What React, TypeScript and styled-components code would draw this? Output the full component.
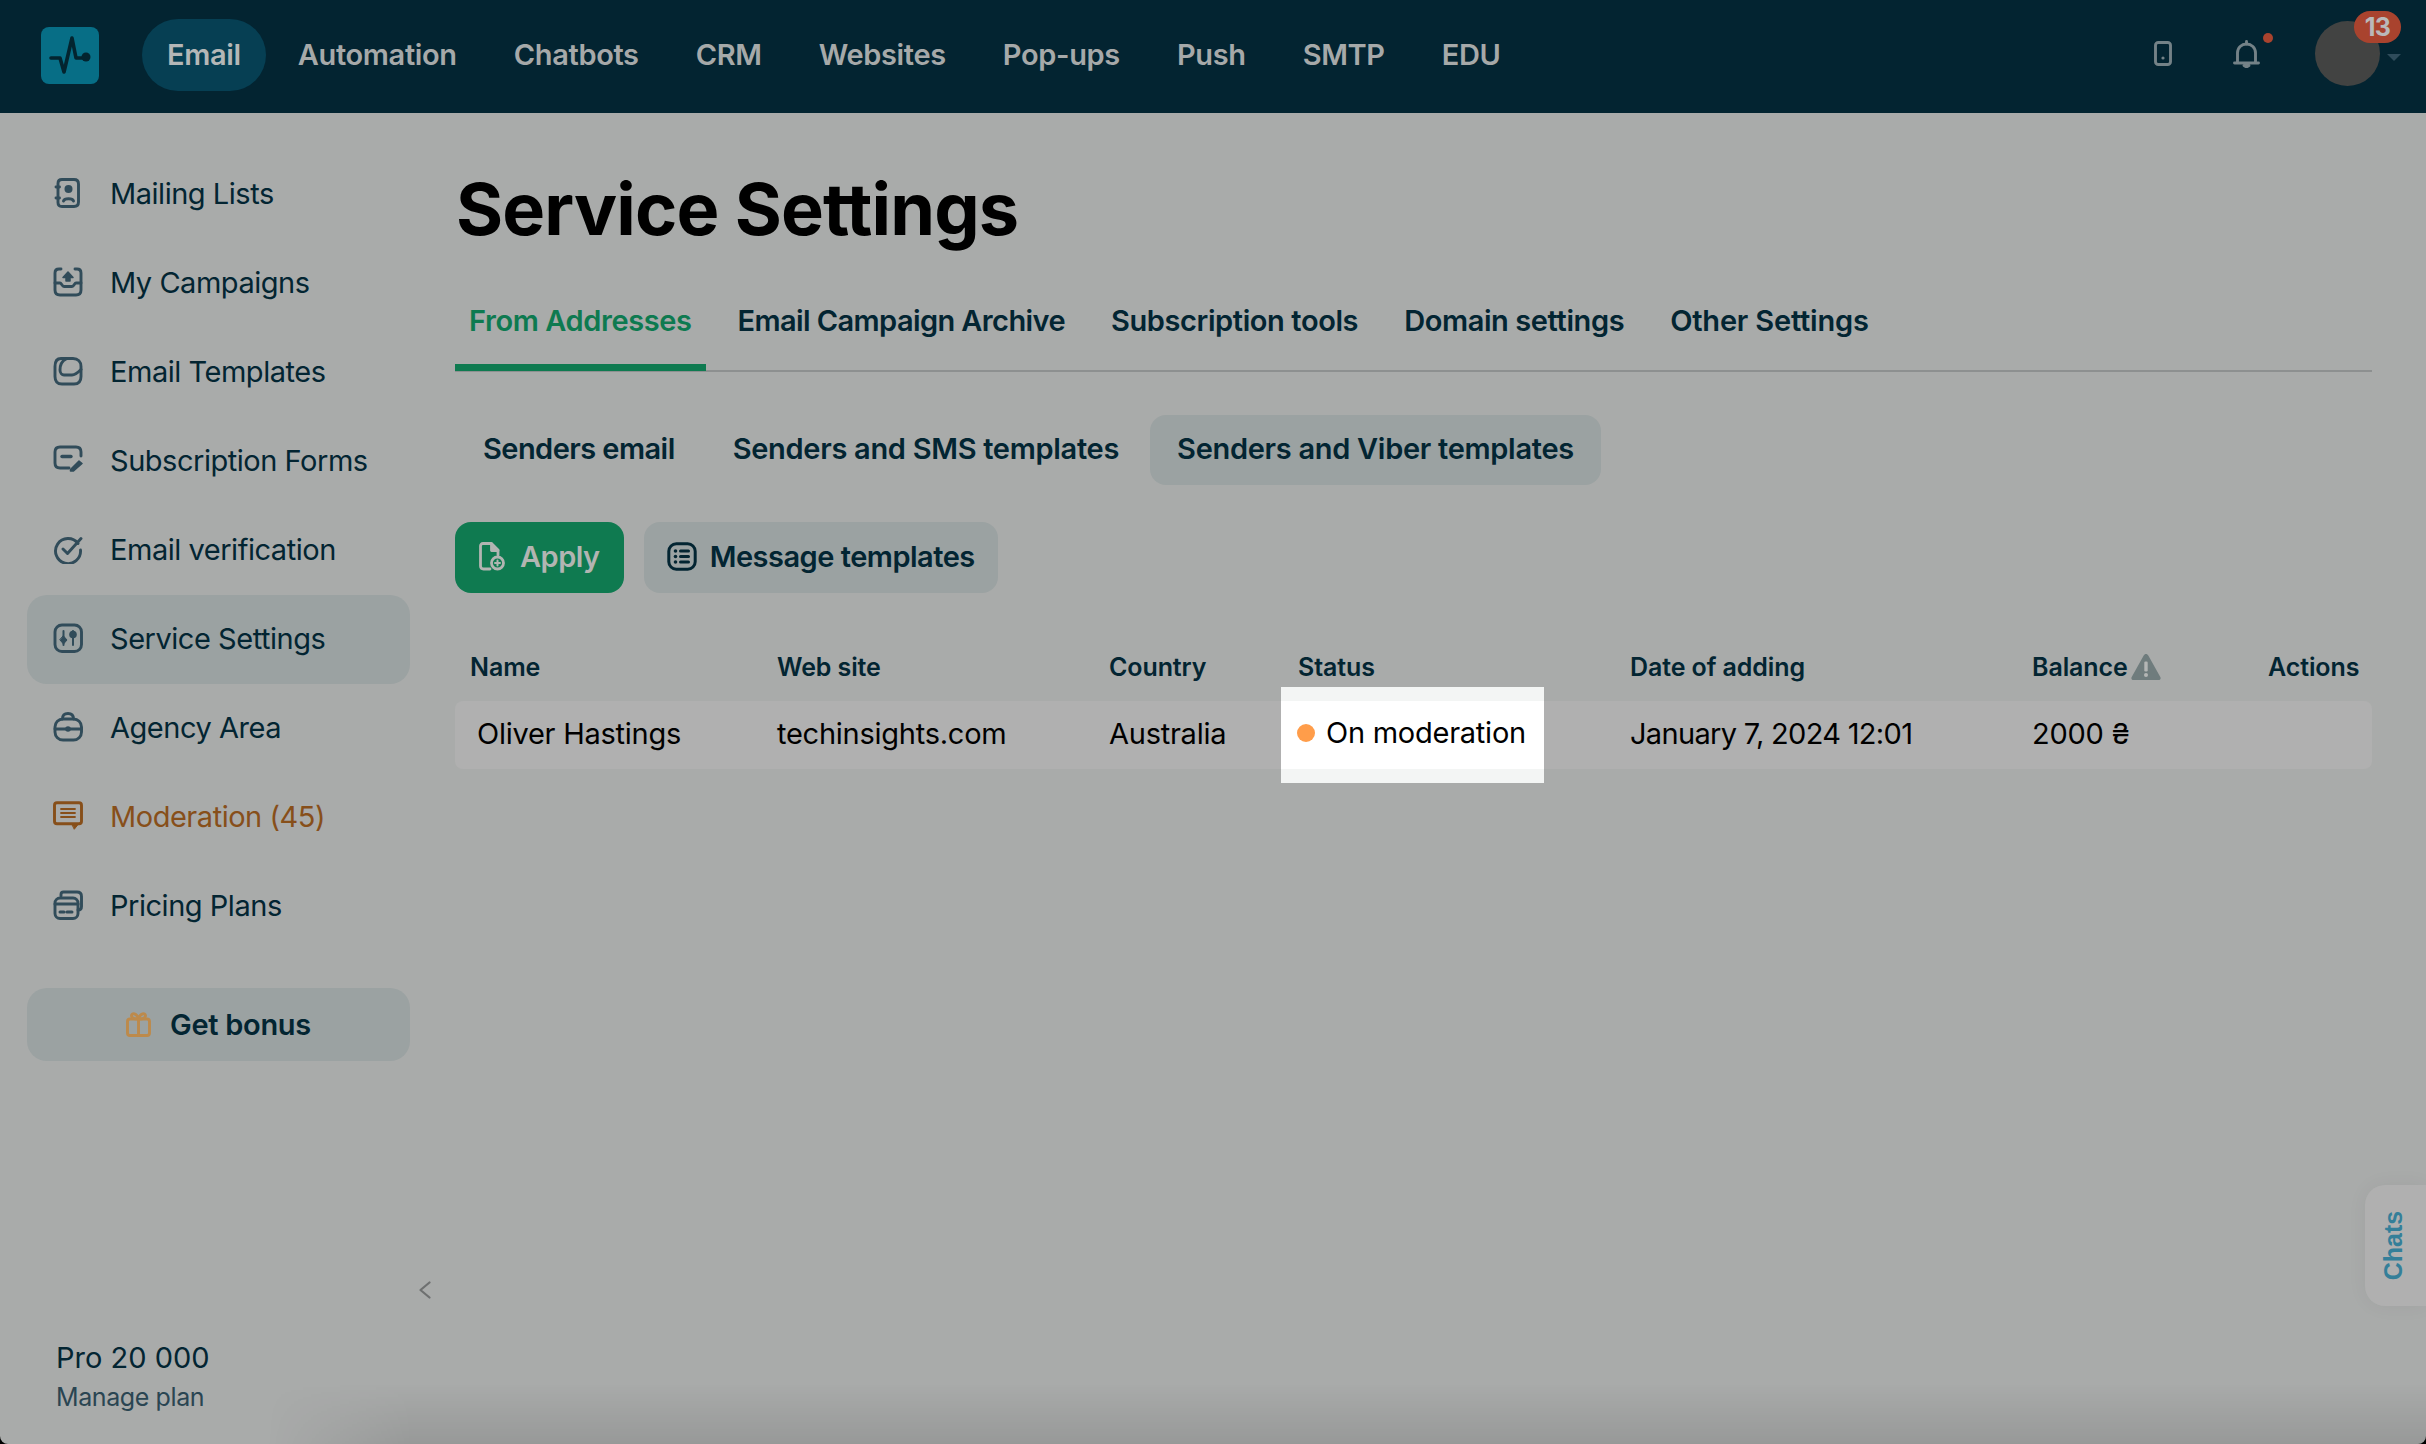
import React from "react";
import styled, { createGlobalStyle } from "styled-components";

const FONT = `Inter, "Noto Sans", "Liberation Sans", sans-serif`;
const INK = "#032532";
const ICON = "#314c5a";

const Global = createGlobalStyle`
  html, body { margin: 0; padding: 0; background: #000; }
  body { font-family: ${FONT}; overflow: hidden; }
  * { box-sizing: border-box; }
`;

const Page = styled.div`
  position: relative;
  width: 2426px;
  height: 1444px;
  display: flex;
  flex-direction: column;
  background: #a9abaa;
  border-radius: 0 0 8px 8px;
  overflow: hidden;
`;

const TopBar = styled.header`
  flex: 0 0 113px;
  display: flex;
  align-items: center;
  padding: 0 0 3px 41px;
  background: #032431;
`;

const Logo = styled.div`
  width: 58px;
  height: 57px;
  margin-right: 43px;
  border-radius: 8px;
  background: #076e86;
  display: flex;
  flex: none;
`;

const Nav = styled.nav`
  display: flex;
  align-items: center;
  gap: 7px;
  flex: 1;
`;

const NavItem = styled.a<{ $active?: boolean }>`
  height: 72px;
  padding: 0 25px 2px;
  display: flex;
  align-items: center;
  border-radius: 36px;
  font-size: 29px;
  font-weight: 600;
  letter-spacing: -0.35px;
  color: ${(p) => (p.$active ? "#b4b7b7" : "#a6a9a9")};
  background: ${(p) => (p.$active ? "#063f53" : "transparent")};
`;

const TopActions = styled.div`
  display: flex;
  align-items: center;
  padding-right: 26px;
  margin-bottom: 3px;
`;

const TopIcon = styled.span<{ $gap?: number }>`
  position: relative;
  display: flex;
  margin-left: ${(p) => p.$gap ?? 0}px;
  color: #748287;
`;

const NotifyDot = styled.i`
  position: absolute;
  top: -7px;
  right: -13px;
  width: 10px;
  height: 10px;
  border-radius: 50%;
  background: #a9432e;
`;

const AvatarWrap = styled.div`
  position: relative;
  width: 85px;
  height: 65px;
  margin-left: 55px;
`;

const Avatar = styled.div`
  width: 65px;
  height: 65px;
  border-radius: 50%;
  background: #424342;
`;

const Badge = styled.span`
  position: absolute;
  top: -10px;
  left: 39px;
  width: 47px;
  height: 32px;
  border-radius: 16px;
  background: #a9432e;
  color: #b9b9b9;
  font-size: 25px;
  font-weight: 700;
  letter-spacing: -0.8px;
  display: flex;
  align-items: center;
  justify-content: center;
`;

const Caret = styled.i`
  position: absolute;
  left: 72px;
  top: 33px;
  border-left: 7px solid transparent;
  border-right: 7px solid transparent;
  border-top: 7px solid #2f4c5b;
`;

const Body = styled.div`
  flex: 1;
  display: flex;
  min-height: 0;
`;

const Sidebar = styled.aside`
  flex: 0 0 455px;
  display: flex;
  flex-direction: column;
  padding: 37px 0 0 27px;
`;

const SideItem = styled.a<{ $active?: boolean; $warn?: boolean }>`
  width: 383px;
  height: 89px;
  flex: none;
  padding: 0 0 3px 26px;
  display: flex;
  align-items: center;
  gap: 27px;
  border-radius: 20px;
  font-size: 29px;
  font-weight: 400;
  letter-spacing: -0.47px;
  color: ${(p) => (p.$warn ? "#874f1a" : INK)};
  background: ${(p) => (p.$active ? "#9ba2a2" : "transparent")};
  svg { color: ${(p) => (p.$warn ? "#874f1a" : ICON)}; }
`;

const BonusButton = styled.a`
  width: 383px;
  height: 73px;
  margin-top: 37px;
  flex: none;
  display: flex;
  align-items: center;
  justify-content: center;
  gap: 19px;
  border-radius: 20px;
  background: #9ba2a2;
  color: ${INK};
  font-size: 29px;
  font-weight: 600;
  letter-spacing: -0.3px;
  svg { color: #bd8a4b; }
`;

const Collapse = styled.span`
  margin-top: auto;
  align-self: flex-end;
  margin-right: 24px;
  display: flex;
  color: #6e7070;
`;

const Plan = styled.div`
  margin: 40px 0 30px 29px;
`;

const PlanName = styled.div`
  font-size: 29px;
  line-height: 38px;
  letter-spacing: 0;
  color: ${INK};
`;

const PlanLink = styled.div`
  margin-top: 3px;
  font-size: 25px;
  line-height: 34px;
  letter-spacing: -0.4px;
  color: #2a4552;
`;

const Main = styled.main`
  flex: 1;
  padding: 56px 54px 0 0;
`;

const Title = styled.h1`
  margin: 0 0 0 1px;
  font-size: 72px;
  line-height: 80px;
  font-weight: 700;
  letter-spacing: -0.85px;
  color: #000;
`;

const Tabs = styled.div`
  margin-top: 21px;
  display: flex;
  gap: 18px;
  height: 102px;
  border-bottom: 2px solid #8d9090;
`;

const Tab = styled.a<{ $active?: boolean; $spacing: number }>`
  height: 101px;
  padding: 7px 14px 0;
  display: flex;
  align-items: center;
  font-size: 29px;
  font-weight: 600;
  letter-spacing: ${(p) => p.$spacing}px;
  color: ${(p) => (p.$active ? "#0e7a50" : INK)};
  border-bottom: 7px solid ${(p) => (p.$active ? "#0e7a50" : "transparent")};
`;

const SubTabs = styled.div`
  margin: 43px 0 0 1px;
  display: flex;
  gap: 4px;
`;

const SubTab = styled.a<{ $active?: boolean; $spacing: number }>`
  height: 70px;
  padding: 0 27px 3px;
  display: flex;
  align-items: center;
  border-radius: 16px;
  font-size: 29px;
  font-weight: 600;
  letter-spacing: ${(p) => p.$spacing}px;
  color: ${INK};
  background: ${(p) => (p.$active ? "#9ba2a2" : "transparent")};
`;

const Actions = styled.div`
  margin-top: 37px;
  display: flex;
  gap: 20px;
`;

const Button = styled.a<{ $primary?: boolean }>`
  height: 71px;
  padding: 0 ${(p) => (p.$primary ? "24px" : "23px")} 2px;
  display: flex;
  align-items: center;
  gap: ${(p) => (p.$primary ? "15px" : "13px")};
  border-radius: 16px;
  font-size: 29px;
  font-weight: 600;
  letter-spacing: -0.5px;
  color: ${(p) => (p.$primary ? "#b2b5b2" : INK)};
  background: ${(p) => (p.$primary ? "#0f7a50" : "#9ba2a2")};
`;

const COLS = "322px 332px 189px 332px 402px 236px 1fr";

const HeadRow = styled.div`
  margin-top: 47px;
  height: 54px;
  display: grid;
  grid-template-columns: ${COLS};
  align-items: center;
`;

const HeadCell = styled.div<{ $inset?: number }>`
  display: flex;
  align-items: center;
  gap: 3px;
  padding-left: ${(p) => p.$inset ?? 0}px;
  font-size: 25px;
  font-weight: 600;
  letter-spacing: -0.1px;
  color: ${INK};
`;

const DataRow = styled.div`
  margin-top: 7px;
  height: 68px;
  display: grid;
  grid-template-columns: ${COLS};
  border-radius: 8px;
  background: #b0b0b0;
`;

const DataCell = styled.div<{ $inset?: number }>`
  position: relative;
  display: flex;
  align-items: center;
  padding: 0 0 4px ${(p) => p.$inset ?? 0}px;
  font-size: 29px;
  letter-spacing: -0.25px;
  color: #000;
`;

const DateCell = styled(DataCell)`
  letter-spacing: -0.68px;
`;

const Spotlight = styled.div`
  position: absolute;
  left: -17px;
  top: -14px;
  width: 263px;
  height: 96px;
  display: flex;
  align-items: center;
  gap: 11px;
  padding: 0 0 5px 16px;
  background: linear-gradient(
    #f3f5f4 14px,
    #fff 14px,
    #fff 82px,
    #f3f5f4 82px
  );
`;

const StatusDot = styled.i`
  width: 18px;
  height: 18px;
  border-radius: 50%;
  background: #ff9d4a;
  flex: none;
`;

const ChatsTab = styled.div`
  position: absolute;
  right: 0;
  top: 1185px;
  width: 61px;
  height: 121px;
  padding-right: 3px;
  border-radius: 20px 0 0 20px;
  background: #b0b0b0;
  box-shadow: 0 0 20px rgba(0, 0, 0, 0.05);
  display: flex;
  align-items: center;
  justify-content: center;
`;

const ChatsLabel = styled.span`
  display: block;
  transform: rotate(-90deg);
  font-family: "Liberation Sans", sans-serif;
  font-weight: 700;
  font-size: 25px;
  color: #347f99;
`;

const BottomShade = styled.div`
  position: absolute;
  left: 0;
  right: 0;
  bottom: 0;
  height: 60px;
  pointer-events: none;
  background: linear-gradient(rgba(0, 0, 0, 0), rgba(0, 0, 0, 0.1));
  -webkit-mask-image: linear-gradient(90deg, transparent 11%, #000 17%);
  mask-image: linear-gradient(90deg, transparent 11%, #000 17%);
`;

const Svg = styled.svg.attrs({
  fill: "none",
  stroke: "currentColor",
  strokeLinecap: "round",
  strokeLinejoin: "round",
})`
  display: block;
  flex: none;
`;

const SideSvg = styled(Svg).attrs({ viewBox: "0 0 30 30", strokeWidth: 2.9 })`
  width: 30px;
  height: 30px;
`;

const IconList = () => (
  <SideSvg>
    <path d="M5 5.500C5 3 6.500 1.500 9 1.500h12c3 0 4.500 1.500 4.500 4.500v18c0 3-1.500 4.500-4.500 4.500H9c-2.500 0-4-1.500-4-4z" />
    <path d="M3 9h3.500M3 20h3.500" />
    <circle cx="15.500" cy="11" r="4" fill="currentColor" stroke="none" />
    <path d="M10.500 23c1-3 9-3 10 0" />
  </SideSvg>
);
const IconCampaign = () => (
  <SideSvg>
    <path d="M8 2H6C3.500 2 2 3.500 2 6v17c0 3 1.500 5 5 5h16c3.500 0 5-2 5-5V6c0-2.500-1.500-4-4-4h-2" />
    <path d="M2 16h5c1.500 0 2 3.500 4 3.500h8c2 0 2.500-3.500 4-3.500h5" />
    <path d="M15 5l5 5.500h-3v3.500h-4v-3.500h-3z" fill="currentColor" strokeWidth="1.500" />
  </SideSvg>
);
const IconTemplate = () => (
  <SideSvg>
    <path d="M8 2.500h12c5 0 8 3.500 8 8v10c0 5-2.500 7.500-7 7.500H9c-4.500 0-7-2.500-7-7.500v-10C2 5.500 4 2.500 8 2.500z" />
    <path d="M13 3c-4 2-6 6-6 11 0 3 2 5 4 5h8c3 0 5-1.500 9-5.500" />
  </SideSvg>
);
const IconForm = () => (
  <SideSvg>
    <path d="M16 23H7c-3.500 0-5-1.500-5-5V7c0-3.500 1.500-5 5-5h16c3.500 0 5 1.500 5 5v4" />
    <path d="M9 11.500h9" strokeWidth="3.400" />
    <path d="M17.500 24.500l8.500-8.500 3 2.500-8.500 7.500h-3z" fill="currentColor" strokeWidth="1.500" />
  </SideSvg>
);
const IconVerify = () => (
  <SideSvg>
    <path d="M25 9.500A12.500 12.500 0 1 0 27.500 16" />
    <path d="M10 15l4.500 4.500L28 4.500" />
  </SideSvg>
);
const IconSliders = () => (
  <SideSvg>
    <rect x="2" y="2" width="26.500" height="26.500" rx="7" />
    <path d="M10.500 8v14M20 8v14" strokeWidth="2" />
    <path d="M10.500 13l3.500 4-3.500 4-3.500-4z" fill="currentColor" strokeWidth="1" />
    <circle cx="20" cy="11.500" r="3.800" fill="currentColor" stroke="none" />
  </SideSvg>
);
const IconAgency = () => (
  <SideSvg>
    <path d="M9.500 7c0-4 2-5.500 5.500-5.500s5.500 1.500 5.500 5.500" />
    <rect x="2" y="7" width="26.500" height="21" rx="8" />
    <path d="M2 17h26.500" />
    <circle cx="15" cy="17" r="2.800" fill="currentColor" stroke="none" />
  </SideSvg>
);
const IconModeration = () => (
  <SideSvg>
    <path d="M4 1.800h22c1.500 0 2.500 1 2.500 2.500v16c0 1.500-1 2.500-2.500 2.500H4c-1.500 0-2.500-1-2.500-2.500v-16c0-1.500 1-2.500 2.500-2.500z" />
    <path d="M19 23l6 .5-3.500 4.500z" fill="currentColor" strokeWidth="1" />
    <path d="M8 8h14M8 12h14M8 16h14" strokeWidth="1.800" />
  </SideSvg>
);
const IconPricing = () => (
  <SideSvg>
    <path d="M8 6V4.500C8 3 9 2 10.500 2H24c3 0 4.500 1.500 4.500 4.500v10c0 2-1 3.500-3.500 3.500" />
    <rect x="2" y="8" width="23" height="20.500" rx="5" />
    <path d="M2 14h23" strokeWidth="3" />
    <path d="M7 22h4M14 22h5" strokeWidth="3" />
  </SideSvg>
);
const IconGift = () => (
  <Svg viewBox="0 0 25 25" width="25" height="25" strokeWidth="2.900">
    <rect x="1.500" y="7" width="22" height="16.500" rx="2.500" />
    <path d="M12.500 7v16.500" />
    <path d="M12.500 7C8 7 5.500 6 5.500 3.500c0-3 5.500-2.500 7 3.500zM12.500 7c4.500 0 7-1 7-3.500 0-3-5.500-2.500-7 3.500z" />
  </Svg>
);
const IconChevron = () => (
  <Svg viewBox="0 0 12 18" width="12" height="18" strokeWidth="2.200">
    <path d="M10.500 1.500L1.500 9l9 7.500" />
  </Svg>
);
const IconPhone = () => (
  <Svg viewBox="0 0 18 25" width="18" height="25" strokeWidth="2.900">
    <rect x="1.500" y="1.500" width="15" height="22" rx="2.800" />
    <circle cx="9" cy="17" r="1.600" fill="currentColor" stroke="none" />
  </Svg>
);
const IconBell = () => (
  <Svg viewBox="0 0 27 28" width="27" height="28" strokeWidth="2.900">
    <path d="M1.500 23h24M4.500 23V13c0-5.500 4-9 9-9s9 3.500 9 9v10" />
    <path d="M13.500 1.500V4" />
    <path d="M11 25.500h5l-2.500 1.500z" fill="currentColor" />
  </Svg>
);
const IconApply = () => (
  <Svg viewBox="0 0 26 29" width="26" height="29" strokeWidth="2.800">
    <path d="M11 27H4.500C2.500 27 1.500 26 1.500 24V4c0-1.500 1-2.500 2.500-2.500h8.500L19 8v5" />
    <path d="M12.500 2v6.500H19" fill="currentColor" />
    <circle cx="18.500" cy="21" r="6" />
    <path d="M18.500 18.500v5M16 21h5" strokeWidth="2" />
  </Svg>
);
const IconTemplates = () => (
  <Svg viewBox="0 0 30 29" width="30" height="29" strokeWidth="3">
    <rect x="1.800" y="1.800" width="26.400" height="25.400" rx="7.500" />
    <path d="M13.500 9h8M13.500 14.500h8M13.500 20h8" />
    <circle cx="8.500" cy="9" r="1.800" fill="currentColor" stroke="none" />
    <circle cx="8.500" cy="14.500" r="1.800" fill="currentColor" stroke="none" />
    <circle cx="8.500" cy="20" r="1.800" fill="currentColor" stroke="none" />
  </Svg>
);
const IconWarning = () => (
  <Svg viewBox="0 0 30 26" width="30" height="26">
    <path stroke="none" d="M15 0c1 0 1.800.6 2.300 1.500l12 21.500c.8 1.500 0 3-1.700 3H2.400C.7 26-.1 24.500.7 23l12-21.500C13.200.6 14 0 15 0z" fill="#6f7c7d" />
    <rect stroke="none" x="13.300" y="7.500" width="3.400" height="10" rx="1.200" fill="#b4b6b5" />
    <circle stroke="none" cx="15" cy="21" r="2" fill="#b4b6b5" />
  </Svg>
);
const LogoMark = () => (
  <Svg viewBox="0 0 58 57" width="58" height="57" strokeWidth="3.600" color="#03242f">
    <path d="M10 31h9l4 14 8-34 4 20h9" />
    <circle cx="45" cy="30" r="4.500" fill="currentColor" stroke="none" />
  </Svg>
);

const navItems = ["Email", "Automation", "Chatbots", "CRM", "Websites", "Pop-ups", "Push", "SMTP", "EDU"];
const sideItems = [
  { label: "Mailing Lists", Icon: IconList },
  { label: "My Campaigns", Icon: IconCampaign },
  { label: "Email Templates", Icon: IconTemplate },
  { label: "Subscription Forms", Icon: IconForm },
  { label: "Email verification", Icon: IconVerify },
  { label: "Service Settings", Icon: IconSliders, active: true },
  { label: "Agency Area", Icon: IconAgency },
  { label: "Moderation (45)", Icon: IconModeration, warn: true },
  { label: "Pricing Plans", Icon: IconPricing },
];
const tabs = [
  { label: "From Addresses", spacing: -0.4 },
  { label: "Email Campaign Archive", spacing: -0.6 },
  { label: "Subscription tools", spacing: -0.4 },
  { label: "Domain settings", spacing: -0.4 },
  { label: "Other Settings", spacing: -0.2 },
];
const subTabs = [
  { label: "Senders email", spacing: -0.55 },
  { label: "Senders and SMS templates", spacing: -0.3 },
  { label: "Senders and Viber templates", spacing: -0.3 },
];

export default function App() {
  return (
    <Page>
      <Global />
      <TopBar>
        <Logo>
          <LogoMark />
        </Logo>
        <Nav>
          {navItems.map((n, i) => (
            <NavItem key={n} $active={i === 0}>
              {n}
            </NavItem>
          ))}
        </Nav>
        <TopActions>
          <TopIcon>
            <IconPhone />
          </TopIcon>
          <TopIcon $gap={61}>
            <IconBell />
            <NotifyDot />
          </TopIcon>
          <AvatarWrap>
            <Avatar />
            <Badge>13</Badge>
            <Caret />
          </AvatarWrap>
        </TopActions>
      </TopBar>
      <Body>
        <Sidebar>
          {sideItems.map(({ label, Icon, active, warn }) => (
            <SideItem key={label} $active={active} $warn={warn}>
              <Icon />
              {label}
            </SideItem>
          ))}
          <BonusButton>
            <IconGift />
            Get bonus
          </BonusButton>
          <Collapse>
            <IconChevron />
          </Collapse>
          <Plan>
            <PlanName>Pro 20 000</PlanName>
            <PlanLink>Manage plan</PlanLink>
          </Plan>
        </Sidebar>
        <Main>
          <Title>Service Settings</Title>
          <Tabs>
            {tabs.map((t, i) => (
              <Tab key={t.label} $active={i === 0} $spacing={t.spacing}>
                {t.label}
              </Tab>
            ))}
          </Tabs>
          <SubTabs>
            {subTabs.map((t, i) => (
              <SubTab key={t.label} $active={i === 2} $spacing={t.spacing}>
                {t.label}
              </SubTab>
            ))}
          </SubTabs>
          <Actions>
            <Button $primary>
              <IconApply />
              Apply
            </Button>
            <Button>
              <IconTemplates />
              Message templates
            </Button>
          </Actions>
          <HeadRow>
            <HeadCell $inset={15}>Name</HeadCell>
            <HeadCell>Web site</HeadCell>
            <HeadCell>Country</HeadCell>
            <HeadCell>Status</HeadCell>
            <HeadCell>Date of adding</HeadCell>
            <HeadCell>
              Balance
              <IconWarning />
            </HeadCell>
            <HeadCell>Actions</HeadCell>
          </HeadRow>
          <DataRow>
            <DataCell $inset={22}>Oliver Hastings</DataCell>
            <DataCell>techinsights.com</DataCell>
            <DataCell>Australia</DataCell>
            <DataCell>
              <Spotlight>
                <StatusDot />
                On moderation
              </Spotlight>
            </DataCell>
            <DateCell>January 7, 2024 12:01</DateCell>
            <DataCell>2000 ₴</DataCell>
            <DataCell />
          </DataRow>
        </Main>
      </Body>
      <ChatsTab>
        <ChatsLabel>Chats</ChatsLabel>
      </ChatsTab>
      <BottomShade />
    </Page>
  );
}
